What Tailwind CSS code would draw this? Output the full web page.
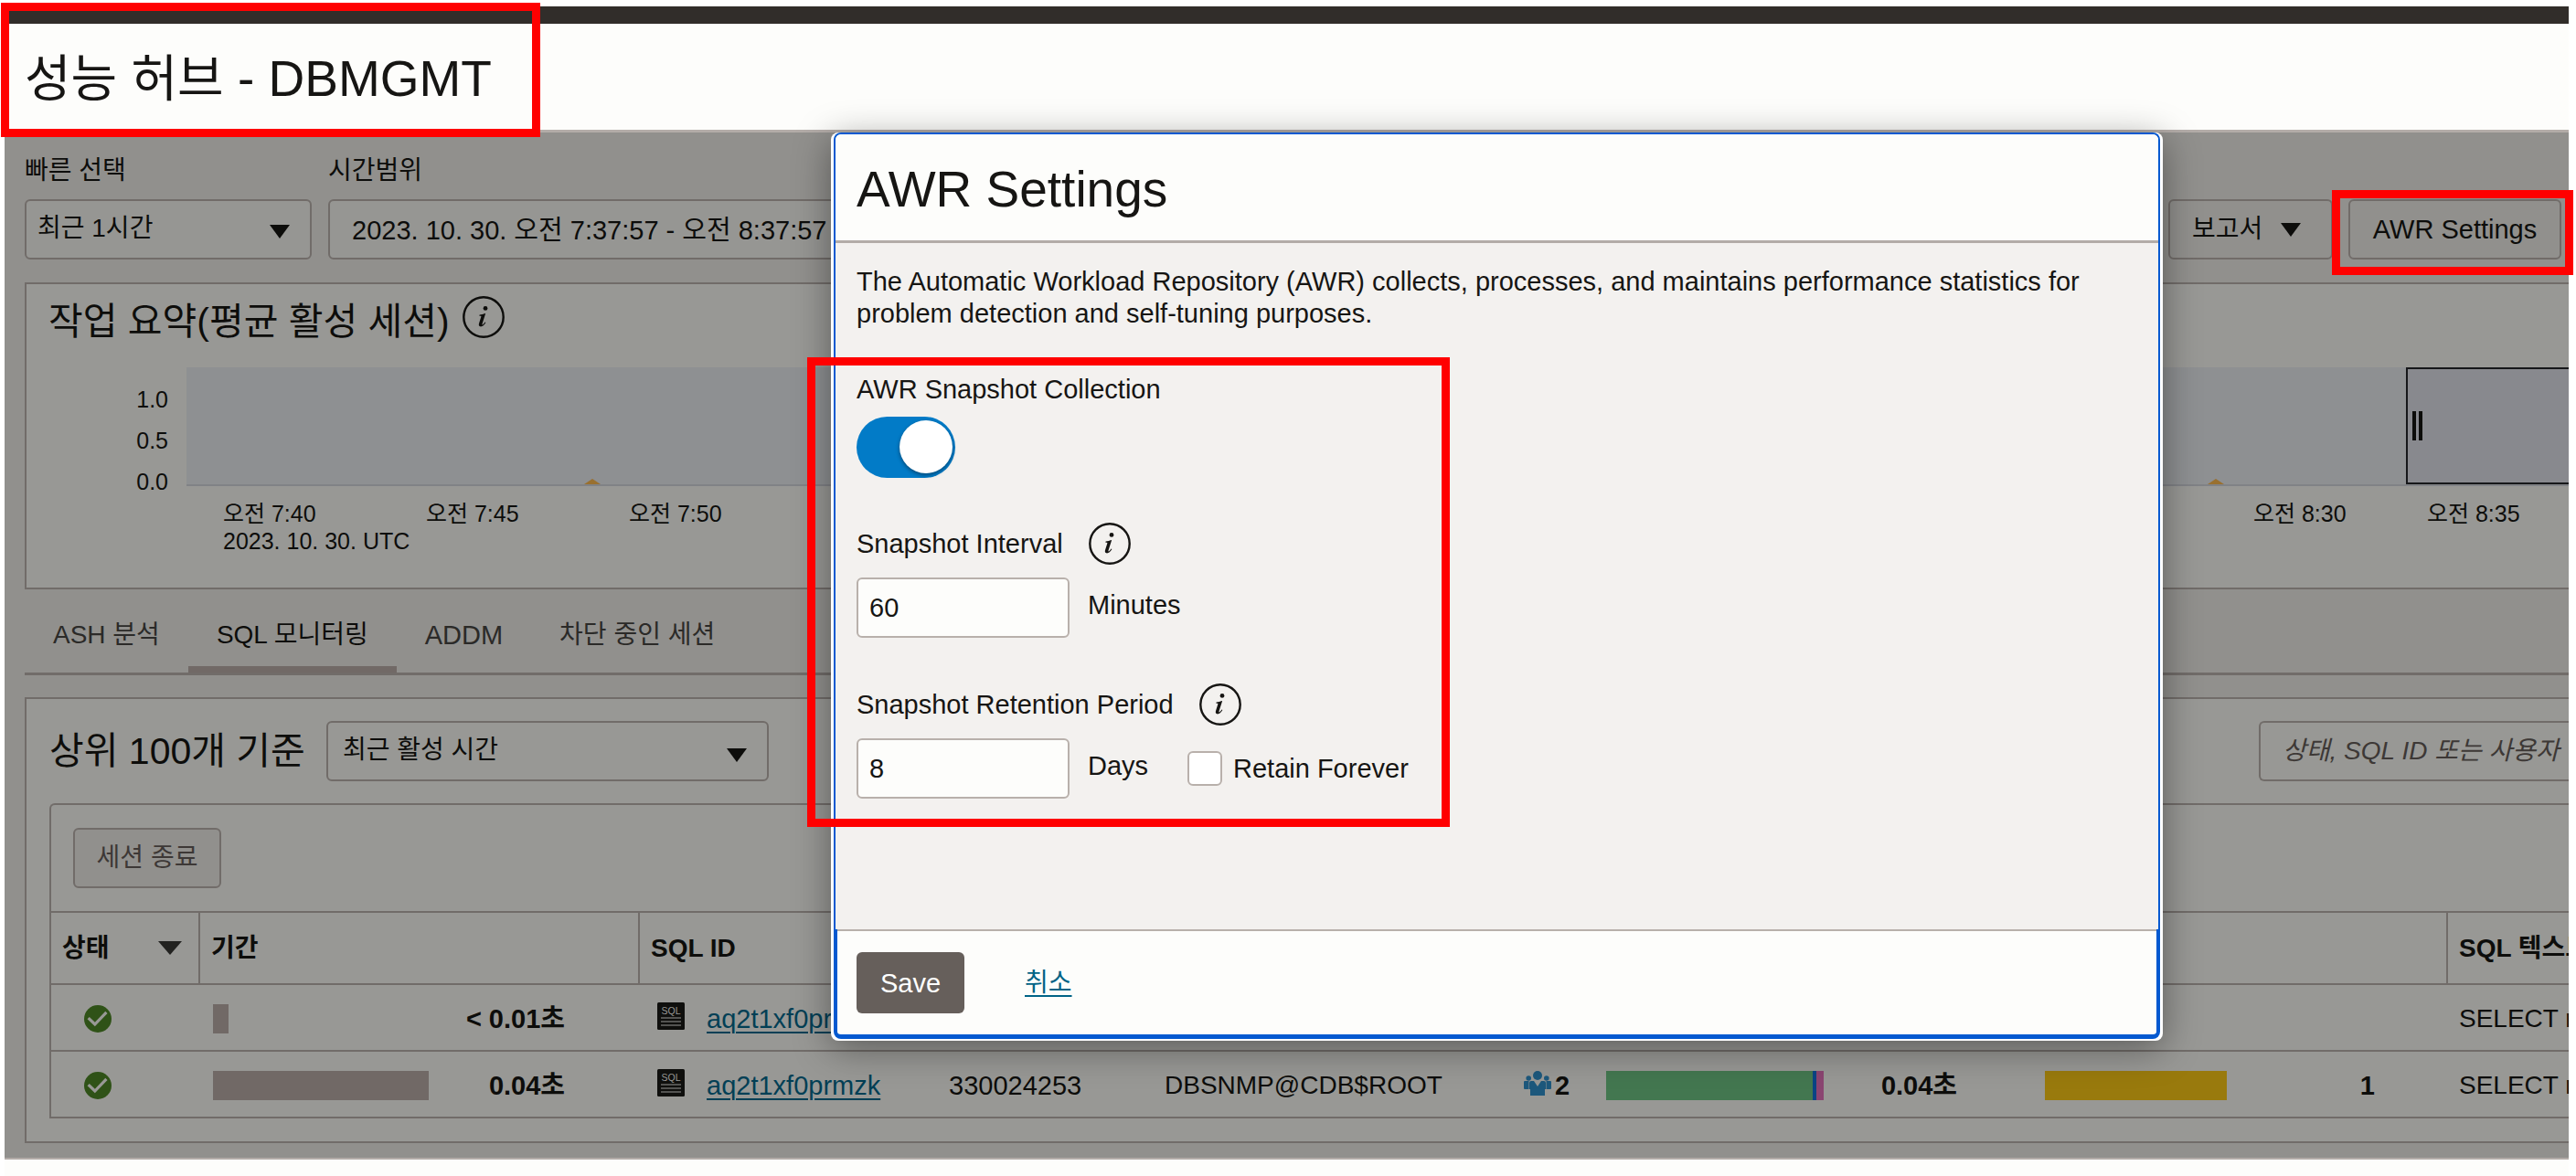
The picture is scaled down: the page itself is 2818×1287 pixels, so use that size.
<!DOCTYPE html>
<html lang="ko">
<head>
<meta charset="utf-8">
<title>성능 허브 - DBMGMT</title>
<script src="https://cdn.jsdelivr.net/npm/@tailwindcss/browser@4"></script>
</head>
<body class="bg-white">
<svg class="hidden" aria-hidden="true">
  <symbol id="info" viewBox="0 0 46 46">
    <circle cx="23" cy="23" r="21.7" fill="none" stroke="currentColor" stroke-width="2.4"/>
    <circle cx="25" cy="13.4" r="2.4" fill="currentColor"/>
    <path d="M18.6 20.6c2.2-.2 4.2-.8 6-1.6l.5.3-3.600 11.200c-.3 1 .2 1.300 1 .6.8-.7 1.500-1.600 2.100-2.500l.8.5c-1.600 2.700-3.500 4.300-5.400 4.300-1.900 0-2.600-1.300-2-3.300l2.300-7.400c.2-.7 0-1-.7-1h-1.200z" fill="currentColor"/>
  </symbol>
  <symbol id="check" viewBox="0 0 30 30">
    <circle cx="15" cy="15" r="15" fill="#2f5217"/>
    <path d="M5.800 15.200l6 5.800L23.300 9" fill="none" stroke="#989895" stroke-width="3.200" stroke-linecap="square"/>
  </symbol>
  <symbol id="sql" viewBox="0 0 30 30">
    <rect width="30" height="30" rx="1.500" fill="#0f0f0d"/>
    <text x="15" y="13.200" text-anchor="middle" font-family="Liberation Sans" font-size="10.500" fill="#989895">SQL</text>
    <path d="M4 17h22M4 21h22M4 25h22" stroke="#989895" stroke-width="1.200"/>
  </symbol>
  <symbol id="people" viewBox="0 0 30 28">
    <g fill="#1d587c"><circle cx="15" cy="5" r="5"/><circle cx="5.200" cy="8" r="2.800"/><circle cx="24.800" cy="8" r="2.800"/>
    <path d="M0 12q0-1 1-1h4.500v9H1q-1 0-1-1zM30 12q0-1-1-1h-4.500v9H29q1 0 1-1zM8 11h3l4 6 4-6h3q2 0 2 2v7h-1v7H7v-7H6v-7q0-2 2-2z"/></g>
  </symbol>
</svg>

<div class="relative overflow-hidden pl-[5px] pr-2 pt-[7px] font-['Liberation_Sans','Noto_Sans_CJK_KR',sans-serif] text-[28px] leading-[34px] text-[#0d0d0b]">
  <header class="border-b-[3px] border-[#b3aca8] bg-[#fdfdfb]">
    <div class="h-[19px] bg-[#312d2a]"></div>
    <div class="flex h-[116px] items-center px-[22px] pt-1">
      <h1 class="text-[55px] leading-[72px] text-[#161513]">성능 허브 - DBMGMT</h1>
    </div>
  </header>

  <main class="border-b-2 border-[#b3aca8] bg-[#91908d] pb-4 pl-[22px]">
    <div class="flex items-end gap-[18px] pr-2 pt-[25px]">
      <div class="flex flex-col gap-3.5">
        <label for="quick">빠른 선택</label>
        <div class="relative flex">
          <select id="quick" class="h-[66px] w-[314px] appearance-none rounded-md border-2 border-[#716c69] bg-[#969693] pb-0.5 pl-3"><option>최근 1시간</option></select>
          <svg class="absolute right-6 top-7 h-[15px] w-[22px]" viewBox="0 0 22 15"><path d="M0 0h22L11 15z" fill="#0d0d0b"/></svg>
        </div>
      </div>
      <div class="flex flex-col gap-3.5">
        <label for="range">시간범위</label>
        <input id="range" type="text" class="h-[66px] w-[620px] rounded-md border-2 border-[#716c69] bg-[#969693] pb-1 pl-6 text-[29px]" value="2023. 10. 30. 오전 7:37:57 - 오전 8:37:57">
      </div>
      <div class="ml-auto flex gap-[17px]">
        <button type="button" class="flex h-[66px] w-[180px] items-center gap-5 rounded-md border-2 border-[#716c69] bg-[#91908d] pl-6">보고서
          <svg class="h-[15px] w-[22px]" viewBox="0 0 22 15"><path d="M0 0h22L11 15z" fill="#0d0d0b"/></svg>
        </button>
        <button type="button" class="h-[66px] w-[233px] rounded-md border-2 border-[#716c69] bg-[#91908d] text-[29px]">AWR Settings</button>
      </div>
    </div>

    <section class="mt-[25px] h-[336px] border-2 border-r-0 border-[#716c69] bg-[#989895]">
      <div class="flex h-[82px] items-center gap-3.5 pl-6">
        <h2 class="text-[41px] leading-[52px]">작업 요약(평균 활성 세션)</h2>
        <button type="button" aria-label="정보" class="mb-2.5"><svg class="h-[46px] w-[46px]"><use href="#info"/></svg></button>
      </div>
      <div class="mt-[9px] flex text-[25px] leading-[30px]">
        <div class="flex w-[175px] flex-col gap-[15px] pr-5 pt-5 text-right">
          <span>1.0</span><span>0.5</span><span>0.0</span>
        </div>
        <div class="flex-1">
          <div class="relative h-[130px] border-b-2 border-[#808286] bg-[#8e9092]">
            <svg class="absolute bottom-0 left-[435px] h-1.5 w-[18px]" viewBox="0 0 18 6"><path d="M0 6L9 0l9 6z" fill="#99702f"/></svg>
            <svg class="absolute bottom-0 right-[377px] h-1.5 w-[18px]" viewBox="0 0 18 6"><path d="M0 6L9 0l9 6z" fill="#99702f"/></svg>
            <div class="absolute inset-y-0 right-0 flex w-[178px] items-center gap-[3px] border-2 border-r-0 border-[#16171a] bg-[#88898e] pl-[5px]">
              <span class="h-8 w-1 bg-[#0d0d0b]"></span><span class="h-8 w-1 bg-[#0d0d0b]"></span>
            </div>
          </div>
          <div class="flex pl-10 pt-[15px]">
            <div class="w-[222px]">오전 7:40<br><span class="whitespace-nowrap">2023. 10. 30. UTC</span></div>
            <div class="w-[222px]">오전 7:45</div>
            <div class="w-[222px]">오전 7:50</div>
            <div class="ml-auto w-[190px]">오전 8:30</div>
            <div class="w-[155px]">오전 8:35</div>
          </div>
        </div>
      </div>
    </section>

    <nav class="flex h-[94px] border-b-[3px] border-[#716c69] text-[#2b2a28]">
      <button type="button" class="border-b-[7px] border-transparent px-[31px] pt-4">ASH 분석</button>
      <button type="button" class="border-b-[7px] border-[#716966] px-[31px] pt-4 text-[#0d0d0b]">SQL 모니터링</button>
      <button type="button" class="border-b-[7px] border-transparent px-[31px] pt-4 text-[29px]">ADDM</button>
      <button type="button" class="border-b-[7px] border-transparent px-[31px] pt-4">차단 중인 세션</button>
    </nav>

    <section class="mt-6 border-2 border-r-0 border-[#716c69] bg-[#989895] pb-[25px] pl-[25px] pt-6">
      <div class="flex items-center">
        <label for="top" class="w-[303px] text-[41px] leading-[52px]">상위 100개 기준</label>
        <div class="relative flex">
          <select id="top" class="h-[66px] w-[484px] appearance-none rounded-md border-2 border-[#716c69] bg-[#989895] pb-0.5 pl-4"><option>최근 활성 시간</option></select>
          <svg class="absolute right-6 top-[30px] h-[15px] w-[22px]" viewBox="0 0 22 15"><path d="M0 0h22L11 15z" fill="#0d0d0b"/></svg>
        </div>
        <input type="text" aria-label="검색" placeholder="상태, SQL ID 또는 사용자" class="ml-auto h-[66px] w-[339px] rounded-l-md border-2 border-r-0 border-[#716c69] bg-[#989895] pl-6 italic placeholder:text-[#3d3836]">
      </div>

      <div class="mt-6 rounded-tl-md border-2 border-r-0 border-[#716c69] border-b-0 pt-[25px]">
        <button type="button" disabled class="ml-6 h-[66px] w-[162px] rounded-md border-2 border-[#716c69] bg-[#91908d] text-[#3d3836]">세션 종료</button>
        <table class="mt-[25px] w-full table-fixed border-separate border-spacing-0 border-t-2 border-[#716c69] text-left">
          <colgroup>
            <col class="w-[163px]"><col class="w-[481px]"><col class="w-[322px]"><col class="w-[236px]"><col class="w-[401px]"><col class="w-[98px]"><col class="w-[464px]"><col class="w-[457px]"><col>
          </colgroup>
          <thead>
            <tr class="h-[79px]">
              <th scope="col" class="border-b-2 border-r-2 border-[#716c69] pl-3 pr-[18px]"><div class="flex items-center justify-between">상태<svg class="h-[15px] w-[26px]" viewBox="0 0 26 15"><path d="M0 0h26L13 15z" fill="#222220"/></svg></div></th>
              <th scope="col" class="border-b-2 border-r-2 border-[#716c69] pl-3">기간</th>
              <th scope="col" class="border-b-2 border-[#716c69] pl-3">SQL ID</th>
              <th scope="col" class="border-b-2 border-[#716c69]"></th>
              <th scope="col" class="border-b-2 border-[#716c69]"></th>
              <th scope="col" class="border-b-2 border-[#716c69]"></th>
              <th scope="col" class="border-b-2 border-[#716c69]"></th>
              <th scope="col" class="border-b-2 border-r-2 border-[#716c69]"></th>
              <th scope="col" class="overflow-hidden whitespace-nowrap border-b-2 border-[#716c69] pl-3">SQL 텍스트</th>
            </tr>
          </thead>
          <tbody>
            <tr class="h-[73px]">
              <td class="border-b-2 border-[#716c69] pl-9 pt-0.5"><svg class="h-[30px] w-[30px]" role="img" aria-label="완료"><use href="#check"/></svg></td>
              <td class="border-b-2 border-[#716c69] pl-3.5 pr-[82px] pt-0.5"><div class="flex items-center justify-between"><span class="h-8 w-[17px] bg-[#716966]"></span><b class="text-[29px]">&lt; 0.01초</b></div></td>
              <td class="border-b-2 border-[#716c69] pl-[19px] pt-0.5"><div class="flex items-center gap-6"><svg class="mb-1.5 h-[30px] w-[30px]"><use href="#sql"/></svg><a href="#" class="text-[29px] text-[#023f55] underline decoration-2 underline-offset-4">aq2t1xf0prmzk</a></div></td>
              <td class="border-b-2 border-[#716c69]" colspan="5"></td>
              <td class="overflow-hidden whitespace-nowrap border-b-2 border-[#716c69] pl-3 pt-0.5">SELECT nvl</td>
            </tr>
            <tr class="h-[73px]">
              <td class="border-b-2 border-[#716c69] pl-9 pt-0.5"><svg class="h-[30px] w-[30px]" role="img" aria-label="완료"><use href="#check"/></svg></td>
              <td class="border-b-2 border-[#716c69] pl-3.5 pr-[82px] pt-0.5"><div class="flex items-center justify-between"><span class="h-8 w-[236px] bg-[#716966]"></span><b class="text-[29px]">0.04초</b></div></td>
              <td class="border-b-2 border-[#716c69] pl-[19px] pt-0.5"><div class="flex items-center gap-6"><svg class="mb-1.5 h-[30px] w-[30px]"><use href="#sql"/></svg><a href="#" class="text-[29px] text-[#023f55] underline decoration-2 underline-offset-4">aq2t1xf0prmzk</a></div></td>
              <td class="border-b-2 border-[#716c69] pl-4 pt-0.5 text-[29px]">330024253</td>
              <td class="border-b-2 border-[#716c69] pl-4 pt-0.5">DBSNMP@CDB$ROOT</td>
              <td class="border-b-2 border-[#716c69] pl-2 pt-0.5"><div class="flex items-center gap-1"><svg class="mb-1 h-7 w-[30px]"><use href="#people"/></svg><b class="text-[29px]">2</b></div></td>
              <td class="border-b-2 border-[#716c69] pr-20 pt-0.5"><div class="flex items-center justify-between"><span class="flex h-8"><span class="w-[226px] bg-[#437750]"></span><span class="w-1 bg-[#0b4485]"></span><span class="w-2 bg-[#8b4571]"></span></span><b class="text-[29px]">0.04초</b></div></td>
              <td class="border-b-2 border-[#716c69] pl-4 pr-20 pt-0.5"><div class="flex items-center justify-between"><span class="h-8 w-[199px] bg-[#997a0d]"></span><b class="text-[29px]">1</b></div></td>
              <td class="overflow-hidden whitespace-nowrap border-b-2 border-[#716c69] pl-3 pt-0.5">SELECT nvl</td>
            </tr>
          </tbody>
        </table>
      </div>
    </section>
  </main>
  <div class="h-[19px] bg-[#fdfdfb]"></div>

  <div role="dialog" aria-labelledby="dlg" class="absolute left-[909px] right-[452px] top-[145px] rounded-lg bg-white px-[3px] pb-0.5 text-[29px] text-[#161513] shadow-[0_8px_40px_rgba(0,0,0,0.4)]">
    <div class="overflow-hidden rounded-t-lg border-x-2 border-t-2 border-[#0459d0]">
      <div class="flex h-[119px] items-center border-b-[3px] border-[#b3aca8] bg-[#fdfdfb] px-[23px] pt-1">
        <h2 id="dlg" class="text-[55px] leading-[72px]">AWR Settings</h2>
      </div>
      <form id="awr" class="h-[751px] bg-[#f3f1ef] px-[23px] pt-[25px]">
        <p class="max-w-[1392px] leading-[35px]">The Automatic Workload Repository (AWR) collects, processes, and maintains performance statistics for problem detection and self-tuning purposes.</p>
        <label for="collect" class="mt-12 block">AWR Snapshot Collection</label>
        <input id="collect" type="checkbox" role="switch" checked class="mt-[13px] flex h-[67px] w-[108px] appearance-none rounded-full bg-[#027bc7] pl-[47px] pt-1 before:h-[58px] before:w-[58px] before:rounded-full before:bg-white before:shadow-[0_2px_4px_rgba(0,0,0,0.4)]">

        <div class="mt-[49px] flex items-center gap-7">
          <label for="interval">Snapshot Interval</label>
          <button type="button" aria-label="Info"><svg class="h-[46px] w-[46px]"><use href="#info"/></svg></button>
        </div>
        <div class="mt-3.5 flex items-center gap-5">
          <input id="interval" type="text" value="60" class="h-[66px] w-[233px] rounded-md border-2 border-[#b8b0ab] bg-[#fdfdfb] px-3">
          <span class="pb-1.5">Minutes</span>
        </div>

        <div class="mt-[50px] flex items-center gap-7">
          <label for="retention">Snapshot Retention Period</label>
          <button type="button" aria-label="Info"><svg class="h-[46px] w-[46px]"><use href="#info"/></svg></button>
        </div>
        <div class="mt-3.5 flex items-center gap-5">
          <input id="retention" type="text" value="8" class="h-[66px] w-[233px] rounded-md border-2 border-[#b8b0ab] bg-[#fdfdfb] px-3">
          <span class="w-[89px] pb-1.5">Days</span>
          <label class="flex items-center gap-3"><input type="checkbox" class="h-[38px] w-[38px] appearance-none rounded-md border-2 border-[#b8b0ab] bg-white">Retain Forever</label>
        </div>
      </form>
    </div>
    <div class="flex h-[120px] items-center gap-[66px] rounded-b-lg border-x-4 border-b-[5px] border-[#0459d0] bg-[#fdfdfb] px-[21px] pt-0.5 shadow-[inset_0_2px_0_#b8b0ab]">
      <button type="submit" form="awr" class="h-[67px] w-[118px] rounded-md bg-[#665f5b] text-white">Save</button>
      <a href="#" class="text-[28px] text-[#006386] underline decoration-2 underline-offset-4">취소</a>
    </div>
  </div>

  <div class="pointer-events-none absolute left-px top-[3px] h-[147px] w-[590px] border-[9px] border-[#ff0000]"></div>
  <div class="pointer-events-none absolute left-[883px] top-[391px] h-[514px] w-[703px] border-[9px] border-[#ff0000]"></div>
  <div class="pointer-events-none absolute right-[3px] top-[208px] h-[93px] w-[264px] border-[9px] border-[#ff0000]"></div>
</div>
</body>
</html>
